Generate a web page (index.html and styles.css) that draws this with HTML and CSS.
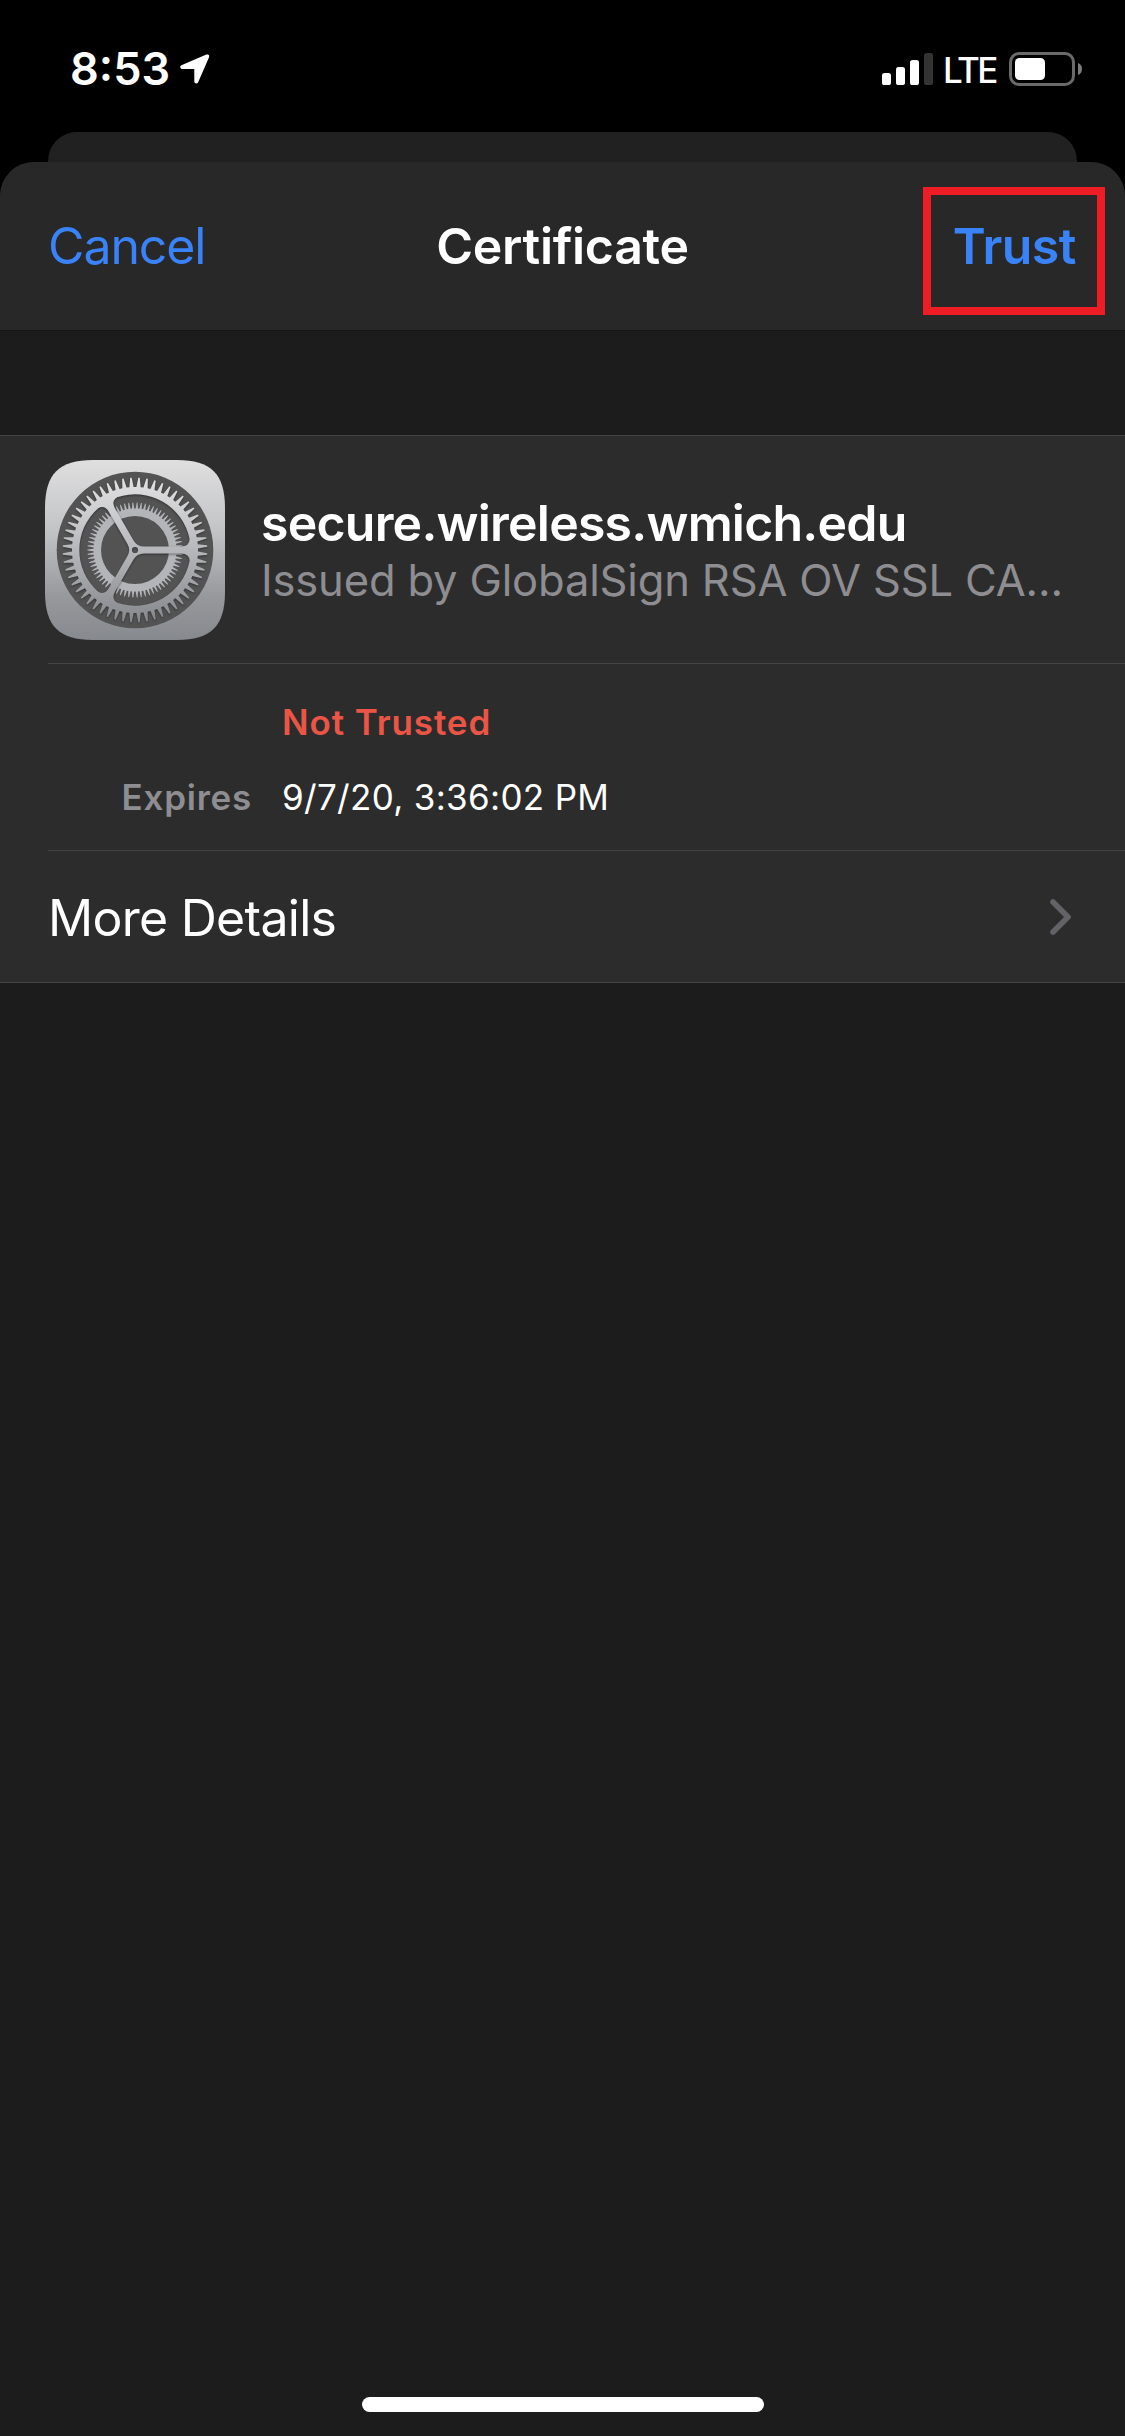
FILE: index.html
```html
<!DOCTYPE html>
<html lang="en">
<head>
<meta charset="utf-8">
<title>Certificate</title>
<link rel="stylesheet" href="styles.css">
</head>
<body>
<div class="screen">
  <header class="status">
    <div class="status-left">
      <span class="clock">8:53</span>
      <svg class="location" width="32" height="32" viewBox="0 0 32 32">
        <path d="M28.2 3.4 L3.2 14 H16 Q17.3 14 17.3 15.3 V28.4 Z" fill="#fff" stroke="#fff" stroke-width="4" stroke-linejoin="round"/>
      </svg>
    </div>
    <div class="status-right">
      <svg class="signal" width="51" height="32" viewBox="0 0 51 32" fill="#fff">
        <rect x="0" y="20" width="9" height="12" rx="2.6"/>
        <rect x="14" y="14" width="9" height="18" rx="2.6"/>
        <rect x="28" y="7" width="9" height="25" rx="2.6"/>
        <rect x="42" y="0" width="9" height="32" rx="2.6" fill="#333"/>
      </svg>
      <span class="carrier">LTE</span>
      <svg class="battery" width="73" height="34" viewBox="0 0 73 34">
        <rect x="1.5" y="1.5" width="63" height="31" rx="8.5" fill="none" stroke="#6a6a6a" stroke-width="3"/>
        <rect x="6" y="6" width="30" height="22" rx="4.5" fill="#fff"/>
        <path d="M69 11 Q73 12.5 73 17 T69 23 Z" fill="#7c7c7c"/>
      </svg>
    </div>
  </header>

  <div class="back-sheet"></div>

  <main class="sheet">
    <nav class="nav">
      <a class="cancel">Cancel</a>
      <h1 class="title">Certificate</h1>
      <a class="trust">Trust<span class="highlight"></span></a>
    </nav>

    <section class="group">
      <div class="identity">
        <svg class="icon" width="180" height="180" viewBox="-90 -90 180 180">
          <defs>
            <linearGradient id="plate" gradientUnits="userSpaceOnUse" x1="0" y1="-90" x2="0" y2="90">
              <stop offset="0" stop-color="#dfdfe0"/>
              <stop offset=".4" stop-color="#c2c3c5"/>
              <stop offset=".75" stop-color="#97999d"/>
              <stop offset="1" stop-color="#86898d"/>
            </linearGradient>
            <linearGradient id="wheel" gradientUnits="userSpaceOnUse" x1="0" y1="-72" x2="0" y2="72">
              <stop offset="0" stop-color="#e2e2e3"/>
              <stop offset=".45" stop-color="#bbbcbf"/>
              <stop offset="1" stop-color="#85888c"/>
            </linearGradient>
            <path id="window" d="M9 3.5 H46 Q54.5 3.5 54.6 11 A55.7 55.7 0 0 1 -17.8 52.8 Q-24.2 48.9 -19.96 41.6 L-1.47 9.55 Q2 3.5 9 3.5 Z"/>
            <mask id="cutouts" maskUnits="userSpaceOnUse" x="-90" y="-90" width="180" height="180">
              <rect x="-90" y="-90" width="180" height="180" fill="#fff"/>
              <use href="#window"/>
              <use href="#window" transform="rotate(120)"/>
              <use href="#window" transform="rotate(240)"/>
              <circle r="3.1"/>
            </mask>
          </defs>
          <path d="M-90 -42 C-90 -76 -76 -90 -42 -90 H42 C76 -90 90 -76 90 -42 V42 C90 76 76 90 42 90 H-42 C-76 90 -90 76 -90 42 Z" fill="url(#plate)"/>
          <circle r="78.3" fill="#535353"/>
          <path id="inner-gear" fill="#b4b5b9" fill-rule="evenodd"/>
          <g class="lifted">
            <path id="outer-gear" fill="url(#wheel)" mask="url(#cutouts)"/>
          </g>
        </svg>
        <div class="names">
          <div class="name">secure.wireless.wmich.edu</div>
          <div class="issuer">Issued by GlobalSign RSA OV SSL CA…</div>
        </div>
      </div>
      <dl class="facts">
        <dt></dt><dd class="untrusted">Not Trusted</dd>
        <dt>Expires</dt><dd>9/7/20, 3:36:02 PM</dd>
      </dl>
      <div class="more">
        <span class="more-label">More Details</span>
        <svg width="22" height="36" viewBox="0 0 22 36">
          <path d="M3 3 L18 18 L3 33" fill="none" stroke="#636266" stroke-width="5.6" stroke-linecap="round" stroke-linejoin="round"/>
        </svg>
      </div>
    </section>

    <div class="home-indicator"></div>
  </main>
</div>
<script src="gear.js"></script>
</body>
</html>
```
FILE: styles.css
```css
* { box-sizing: border-box; }
body {
  margin: 0;
  background: #000;
  color: #fff;
  font-family: Inter, "Liberation Sans", sans-serif;
}
.screen {
  width: 1125px;
  height: 2436px;
  display: flex;
  flex-direction: column;
  overflow: hidden;
}
.status {
  height: 132px;
  flex: none;
  display: flex;
  justify-content: space-between;
  align-items: flex-start;
  padding: 52px 43px 0 70px;
}
.status-left, .status-right { display: flex; }
.clock {
  font-size: 45px;
  font-weight: 600;
  line-height: 34px;
}
.location { margin: 1px 0 0 9px; }
.signal { margin-top: 1px; }
.carrier {
  font-size: 35px;
  font-weight: 500;
  line-height: 36px;
  letter-spacing: -2.6px;
  width: 76px;
  padding-left: 10px;
}
.back-sheet {
  height: 30px;
  flex: none;
  margin: 0 48px;
  background: #212121;
  border-radius: 29px 29px 0 0;
}
.sheet {
  flex: 1;
  display: flex;
  flex-direction: column;
  background: #1c1c1c;
  border-radius: 34px 34px 0 0;
  overflow: hidden;
}
.nav {
  height: 169px;
  flex: none;
  display: grid;
  grid-template-columns: 1fr auto 1fr;
  align-items: center;
  padding: 0 48px;
  background: #282828;
  border-bottom: 1px solid #151515;
  font-size: 50px;
  line-height: 60px;
}
.cancel, .trust { color: #3a82f7; }
.cancel { letter-spacing: -1.1px; }
.title {
  margin: 0;
  font-size: 50px;
  font-weight: 600;
  letter-spacing: -.3px;
}
.trust {
  position: relative;
  justify-self: end;
  margin-right: 1px;
  font-weight: 600;
  letter-spacing: -.5px;
}
.highlight {
  position: absolute;
  top: -29px;
  right: -29px;
  width: 182px;
  height: 128px;
  border: 8px solid #ee1c25;
}
.group {
  margin-top: 104px;
  background: #2c2c2c;
  border-top: 1px solid #434344;
  border-bottom: 1px solid #434344;
}
.identity {
  height: 227px;
  display: flex;
  align-items: center;
  padding: 1px 0 0 45px;
}
.icon { flex: none; }
.lifted { filter: drop-shadow(0 1px 1px rgba(0, 0, 0, .4)); }
.names { margin-left: 36px; }
.name {
  font-size: 50px;
  font-weight: 600;
  line-height: 60px;
  letter-spacing: -.78px;
}
.issuer {
  font-size: 43.5px;
  line-height: 54px;
  letter-spacing: -.16px;
  color: #8e8d92;
  white-space: nowrap;
}
.facts {
  height: 187px;
  margin: 0 0 0 48px;
  padding-top: 21px;
  border-top: 1px solid #434344;
  display: grid;
  grid-template-columns: 204px 1fr;
  grid-template-rows: 75px 75px;
  column-gap: 30px;
  font-size: 35px;
  line-height: 75px;
}
.facts dt {
  text-align: right;
  font-weight: 600;
  letter-spacing: .75px;
  color: #8e8d92;
}
.facts dd {
  margin: 0;
  letter-spacing: .32px;
}
.facts .untrusted {
  font-weight: 600;
  letter-spacing: .9px;
  color: #eb5545;
}
.more {
  height: 132px;
  margin-left: 48px;
  padding-right: 53px;
  border-top: 1px solid #434344;
  display: flex;
  align-items: center;
  justify-content: space-between;
}
.more-label {
  padding-top: 2px;
  font-size: 50px;
  line-height: 60px;
  letter-spacing: -.72px;
}
.home-indicator {
  width: 402px;
  height: 15px;
  margin: auto auto 24px;
  border-radius: 7.5px;
  background: #fff;
}
```
FILE: gear.js
```js
// Outline of a gear with tapered teeth, centred on the origin.
function gear(count, root, tip, rootShare, tipShare) {
  const step = (2 * Math.PI) / count;
  const at = (r, a) => (r * Math.sin(a)).toFixed(2) + ' ' + (-r * Math.cos(a)).toFixed(2);
  const points = [];
  for (let i = 0; i < count; i++) {
    const a = (i + 0.5) * step;
    points.push(
      at(root, a - step * rootShare / 2), at(tip, a - step * tipShare / 2),
      at(tip, a + step * tipShare / 2), at(root, a + step * rootShare / 2)
    );
  }
  return 'M' + points.join('L') + 'Z';
}

document.getElementById('outer-gear').setAttribute('d', gear(56, 63, 72.3, 0.6, 0.18));
document.getElementById('inner-gear').setAttribute('d',
  gear(70, 41.5, 47.5, 0.62, 0.2) + 'M34 0A34 34 0 1 0 -34 0A34 34 0 1 0 34 0Z');
```
